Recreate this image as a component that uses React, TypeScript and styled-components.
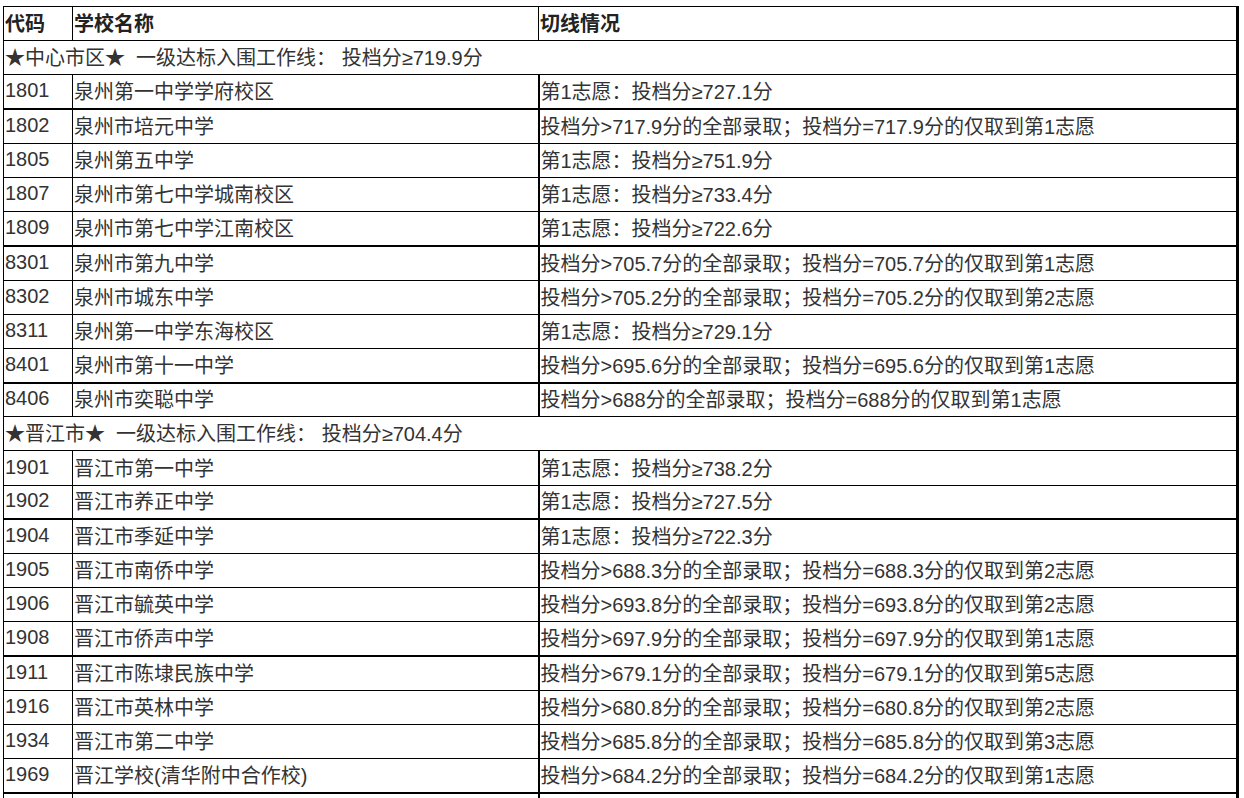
import React from 'react';
import styled, { createGlobalStyle } from 'styled-components';

const GlobalStyle = createGlobalStyle`
    html, body {
        margin: 0;
        padding: 0;
        background: #fff;
    }
    body {
        font-family: "Liberation Sans", "Noto Sans CJK SC", sans-serif;
        color: #333;
    }
`;

const Page = styled.div`
    padding: 6px 0 0 3px;
`;

const Table = styled.table`
    width: 1236px;
    table-layout: fixed;
    border-collapse: collapse;
    border-left: 1px solid #000;
    border-right: 3px solid #000;
    border-top: 1px solid #000;
    font-size: 20px;
`;

const Row = styled.tr<{ $thick?: boolean }>`
    height: 34.2px;
    border-top: ${(p) => (p.$thick ? '2px' : '1px')} solid #000;
`;

const HeadCell = styled.th`
    text-align: left;
    font-weight: bold;
    color: #222;
    padding: 0 1px 2px;
    border-left: 1px solid #000;
    vertical-align: middle;
    white-space: nowrap;
`;

const Cell = styled.td<{ $wide?: boolean }>`
    padding: 0 1px 2px;
    border-left: ${(p) => (p.$wide ? '2px' : '1px')} solid #000;
    vertical-align: middle;
    white-space: nowrap;
    overflow: hidden;
`;

const SectionCell = styled.td`
    padding: 0 1px 2px;
    vertical-align: middle;
    white-space: nowrap;
`;

type School = { code: string; name: string; line: string; thick?: boolean };

const all = (a: string, b: number) =>
    `投档分>${a}分的全部录取；投档分=${a}分的仅取到第${b}志愿`;
const first = (a: string) => `第1志愿：投档分≥${a}分`;

const sections: { title: string; rows: School[] }[] = [
    {
        title: '★中心市区★\u00a0 一级达标入围工作线：\u00a0投档分≥719.9分',
        rows: [
            { code: '1801', name: '泉州第一中学学府校区', line: first('727.1') },
            { code: '1802', name: '泉州市培元中学', line: all('717.9', 1), thick: true },
            { code: '1805', name: '泉州第五中学', line: first('751.9') },
            { code: '1807', name: '泉州市第七中学城南校区', line: first('733.4') },
            { code: '1809', name: '泉州市第七中学江南校区', line: first('722.6') },
            { code: '8301', name: '泉州市第九中学', line: all('705.7', 1), thick: true },
            { code: '8302', name: '泉州市城东中学', line: all('705.2', 2) },
            { code: '8311', name: '泉州第一中学东海校区', line: first('729.1') },
            { code: '8401', name: '泉州市第十一中学', line: all('695.6', 1) },
            { code: '8406', name: '泉州市奕聪中学', line: '投档分>688分的全部录取；投档分=688分的仅取到第1志愿', thick: true },
        ],
    },
    {
        title: '★晋江市★\u00a0 一级达标入围工作线：\u00a0投档分≥704.4分',
        rows: [
            { code: '1901', name: '晋江市第一中学', line: first('738.2') },
            { code: '1902', name: '晋江市养正中学', line: first('727.5') },
            { code: '1904', name: '晋江市季延中学', line: first('722.3'), thick: true },
            { code: '1905', name: '晋江市南侨中学', line: all('688.3', 2) },
            { code: '1906', name: '晋江市毓英中学', line: all('693.8', 2) },
            { code: '1908', name: '晋江市侨声中学', line: all('697.9', 1) },
            { code: '1911', name: '晋江市陈埭民族中学', line: all('679.1', 5), thick: true },
            { code: '1916', name: '晋江市英林中学', line: all('680.8', 2) },
            { code: '1934', name: '晋江市第二中学', line: all('685.8', 3) },
            { code: '1969', name: '晋江学校(清华附中合作校)', line: all('684.2', 1) },
        ],
    },
];

function App() {
    return (
        <Page>
            <GlobalStyle />
            <Table>
                <colgroup>
                    <col style={{ width: 69 }} />
                    <col style={{ width: 466 }} />
                    <col />
                </colgroup>
                <tbody>
                    <Row>
                        <HeadCell>代码</HeadCell>
                        <HeadCell>学校名称</HeadCell>
                        <HeadCell>切线情况</HeadCell>
                    </Row>
                    {sections.map((s) => (
                        <React.Fragment key={s.title}>
                            <Row>
                                <SectionCell colSpan={3}>{s.title}</SectionCell>
                            </Row>
                            {s.rows.map((r) => (
                                <Row key={r.code} $thick={r.thick}>
                                    <Cell>{r.code}</Cell>
                                    <Cell>{r.name}</Cell>
                                    <Cell $wide>{r.line}</Cell>
                                </Row>
                            ))}
                        </React.Fragment>
                    ))}
                    <Row $thick>
                        <Cell>&nbsp;</Cell>
                        <Cell>&nbsp;</Cell>
                        <Cell $wide>&nbsp;</Cell>
                    </Row>
                </tbody>
            </Table>
        </Page>
    );
}

export default App;
